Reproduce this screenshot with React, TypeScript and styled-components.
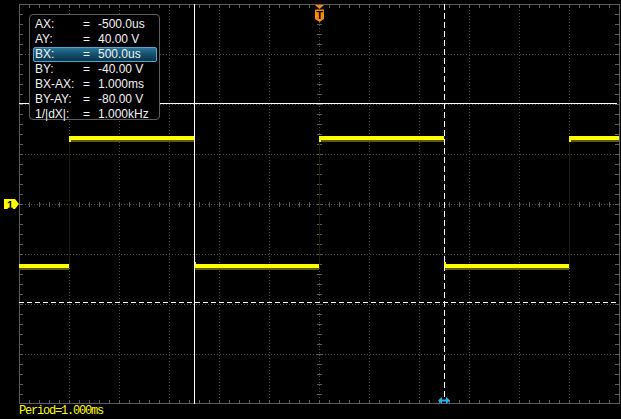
import React from "react";
import styled, { createGlobalStyle } from "styled-components";

const GlobalStyle = createGlobalStyle`
  html, body { margin: 0; padding: 0; background: #000; }
  #root { width: 621px; height: 419px; }
`;

const Page = styled.div`
  width: 621px;
  height: 419px;
  background: #000;
  display: flex;
  flex-direction: column;
  overflow: hidden;
`;

const Scope = styled.div`
  position: relative;
  width: 621px;
  height: 405px;
  flex: none;
`;

const Graticule = styled.svg`
  display: block;
  width: 621px;
  height: 405px;
`;

const CursorPanel = styled.div`
  position: absolute;
  left: 29px;
  top: 14px;
  width: 131px;
  height: 106px;
  box-sizing: border-box;
  border: 1px solid #5e5e5e;
  border-radius: 4px;
  background: #000;
  padding: 2px 2px 2px 3px;
  display: flex;
  flex-direction: column;
  font-family: "Liberation Sans", Arial, sans-serif;
  font-size: 12px;
  color: #f2f2f2;
`;

const Row = styled.div<{ $active?: boolean }>`
  display: grid;
  grid-template-columns: 48px 15px 1fr;
  align-items: center;
  height: 15px;
  box-sizing: border-box;
  padding-left: 1px;
  border: 1px solid ${(p) => (p.$active ? "#4fa8cf" : "transparent")};
  border-radius: 2px;
  background: ${(p) =>
    p.$active ? "linear-gradient(to bottom, #2c7597 0%, #145272 45%, #0a3346 100%)" : "transparent"};
  line-height: 13px;
  white-space: nowrap;
`;

const Cell = styled.span``;

const StatusBar = styled.div`
  height: 14px;
  padding-left: 19px;
  font-family: "Liberation Mono", "Courier New", monospace;
  font-size: 12px;
  letter-spacing: -1.2px;
  line-height: 13px;
  color: #ffff00;
  white-space: nowrap;
`;

const rows: { label: string; value: string; active?: boolean }[] = [
  { label: "AX:", value: "-500.0us" },
  { label: "AY:", value: "40.00 V" },
  { label: "BX:", value: "500.0us", active: true },
  { label: "BY:", value: "-40.00 V" },
  { label: "BX-AX:", value: "1.000ms" },
  { label: "BY-AY:", value: "-80.00 V" },
  { label: "1/|dX|:", value: "1.000kHz" },
];

const L = 19;
const R = 619;
const T = 4;
const B = 404;
const CX = 319;
const CY = 204;

const range = (a: number, b: number, s: number) => {
  const out: number[] = [];
  for (let v = a; v <= b; v += s) out.push(v);
  return out;
};

const BORDER = "#5c5c5c";
const GRID = "#4c4c4c";
const YEL = "#ffff00";
const DIM = "#5a5a00";

function ScopeDrawing() {
  const vGrid = range(L + 50, R - 50, 50).filter((x) => x !== CX);
  const hGrid = range(T + 50, B - 50, 50).filter((y) => y !== CY);
  const xTicks = range(L + 10, R - 10, 10);
  const yTicks = range(T + 10, B - 10, 10);

  const lows: [number, number][] = [
    [19, 69],
    [194, 319],
    [444, 569],
  ];
  const highs: [number, number][] = [
    [69, 194],
    [319, 444],
    [569, 619],
  ];
  const edges = [69, 194, 319, 444, 569];

  return (
    <Graticule viewBox="0 0 621 405">
      {/* grid */}
      {vGrid.map((x) => (
        <line key={"v" + x} x1={x + 0.5} y1={T} x2={x + 0.5} y2={B} stroke={GRID} strokeDasharray="1 2" />
      ))}
      {hGrid.map((y) => (
        <line key={"h" + y} x1={L} y1={y + 0.5} x2={R} y2={y + 0.5} stroke={GRID} strokeDasharray="1 2" />
      ))}
      {/* center axes */}
      <line x1={CX + 0.5} y1={T} x2={CX + 0.5} y2={B} stroke={GRID} strokeDasharray="1 2" />
      <line x1={L} y1={CY + 0.5} x2={R} y2={CY + 0.5} stroke={GRID} strokeDasharray="1 2" />
      {yTicks.map((y) => (
        <line key={"cy" + y} x1={CX - 2} y1={y + 0.5} x2={CX + 3} y2={y + 0.5} stroke={BORDER} />
      ))}
      {xTicks.map((x) => (
        <line key={"cx" + x} x1={x + 0.5} y1={CY - 2} x2={x + 0.5} y2={CY + 3} stroke={BORDER} />
      ))}
      {/* border */}
      <rect x={L + 0.5} y={T + 0.5} width={R - L} height={B - T - 1} fill="none" stroke={BORDER} />
      {xTicks.map((x) => (
        <g key={"bx" + x}>
          <line x1={x + 0.5} y1={T} x2={x + 0.5} y2={T + 4} stroke={BORDER} />
          <line x1={x + 0.5} y1={B - 4} x2={x + 0.5} y2={B} stroke={BORDER} />
        </g>
      ))}
      {yTicks.map((y) => (
        <g key={"by" + y}>
          <line x1={L} y1={y + 0.5} x2={L + 4} y2={y + 0.5} stroke={BORDER} />
          <line x1={R - 4} y1={y + 0.5} x2={R} y2={y + 0.5} stroke={BORDER} />
        </g>
      ))}

      {/* waveform */}
      {edges.map((x) => (
        <line key={"e" + x} x1={x + 0.5} y1={136} x2={x + 0.5} y2={268} stroke="#1e1e08" />
      ))}
      {lows.map(([a, b]) => (
        <g key={"l" + a}>
          <rect x={a} y={268} width={b - a} height={2} fill={DIM} />
          <rect x={a} y={264} width={b - a} height={4} fill={YEL} />
          {a !== 19 && <rect x={a} y={262} width={2} height={3} fill={YEL} />}
        </g>
      ))}
      {highs.map(([a, b]) => (
        <g key={"hh" + a}>
          <rect x={a} y={140} width={b - a} height={2} fill={DIM} />
          <rect x={a} y={136} width={b - a} height={4} fill={YEL} />
          <rect x={a} y={139} width={2} height={3} fill={YEL} />
        </g>
      ))}

      {/* cursors */}
      <line x1={194.5} y1={T} x2={194.5} y2={B} stroke="#ffffff" />
      <line x1={444.5} y1={T} x2={444.5} y2={397} stroke="#ffffff" strokeDasharray="6 3" />
      <line x1={L} y1={103.5} x2={617} y2={103.5} stroke="#ffffff" />
      <line x1={L} y1={302.5} x2={617} y2={302.5} stroke="#ffffff" strokeDasharray="5 3" />

      {/* trigger position marker */}
      <polygon points="315,5 324,5 319.5,9" fill="#ff8a00" />
      <polygon points="315,9.5 324,9.5 324,19 319.5,22 315,19" fill="#ff8a00" />
      <text
        x={319.5}
        y={19}
        textAnchor="middle"
        fontFamily="Liberation Sans, Arial, sans-serif"
        fontSize={11}
        fontWeight={700}
        fill="#000"
      >
        T
      </text>

      {/* channel 1 marker */}
      <polygon points="4,199 15,199 19,204 15,209 4,209" fill={YEL} />
      <text
        x={10}
        y={208.5}
        textAnchor="middle"
        fontFamily="Liberation Sans, Arial, sans-serif"
        fontSize={11}
        fontWeight={700}
        fill="#000"
      >
        1
      </text>

      {/* horizontal cursor indicator */}
      <line x1={441} y1={400.5} x2={447} y2={400.5} stroke="#1ab8f2" strokeWidth={2} />
      <polygon points="438,400.5 442,397 442,404" fill="#1ab8f2" />
      <polygon points="450,400.5 446,397 446,404" fill="#1ab8f2" />
    </Graticule>
  );
}

export default function App() {
  return (
    <Page>
      <GlobalStyle />
      <Scope>
        <ScopeDrawing />
        <CursorPanel>
          {rows.map((r) => (
            <Row key={r.label} $active={r.active}>
              <Cell>{r.label}</Cell>
              <Cell>=</Cell>
              <Cell>{r.value}</Cell>
            </Row>
          ))}
        </CursorPanel>
      </Scope>
      <StatusBar>Period=1.000ms</StatusBar>
    </Page>
  );
}
